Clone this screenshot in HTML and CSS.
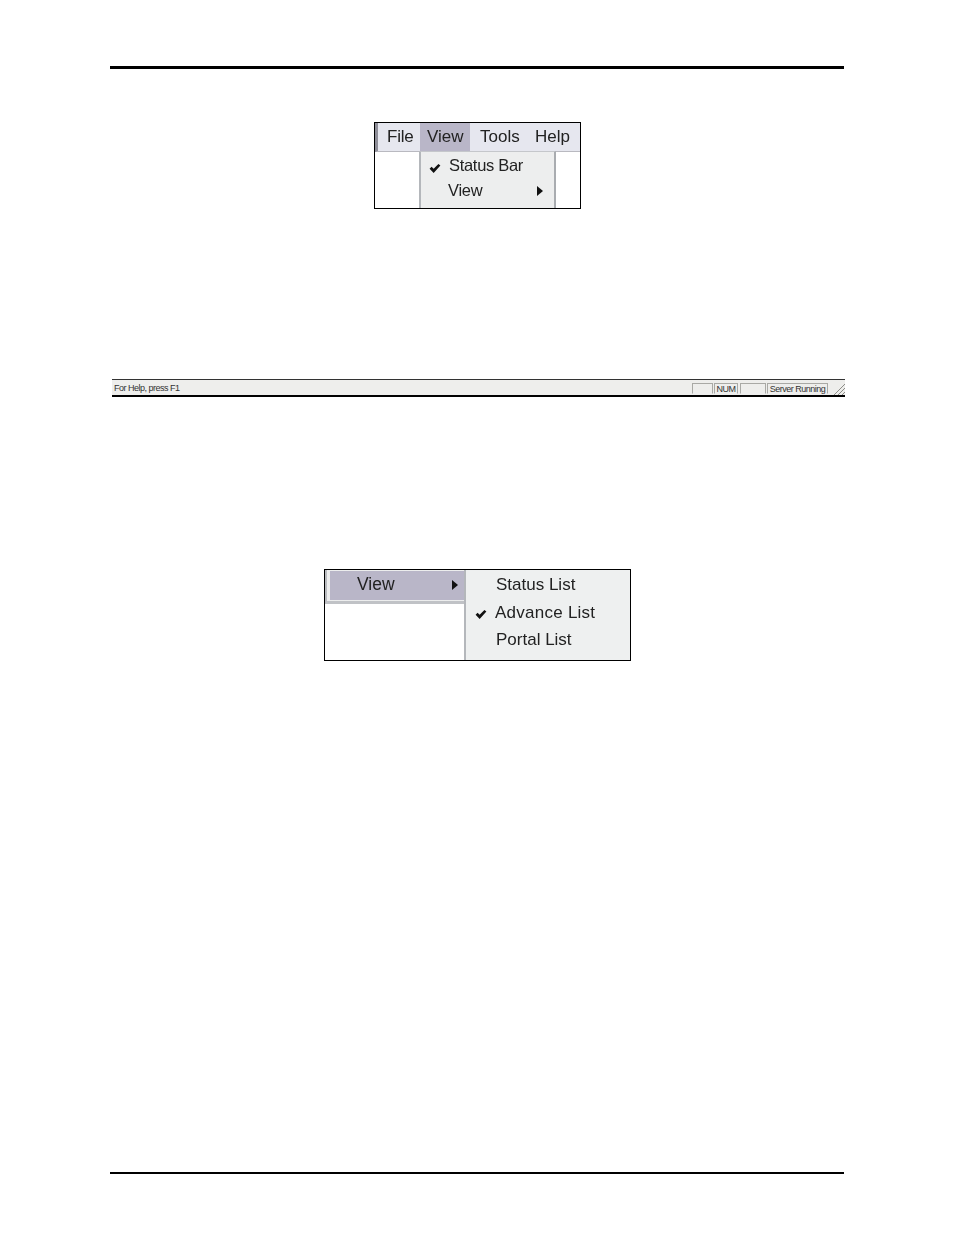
FILE: index.html
```html
<!DOCTYPE html>
<html lang="en">
<head>
<meta charset="utf-8">
<title>Server menus</title>
<link rel="stylesheet" href="styles.css">
</head>
<body>
<div class="page">
  <div class="rule rule-top"></div>

  <div class="shot shot-view">
    <div class="menubar">
      <span class="mb-item mb-file">File</span>
      <span class="mb-item mb-view">View</span>
      <span class="mb-item mb-tools">Tools</span>
      <span class="mb-item mb-help">Help</span>
    </div>
    <div class="dropdown">
      <div class="dd-row dd-first">
        <svg class="check" viewBox="0 0 12 10"><path d="M0 5.4 L2.2 3 L4.5 5.2 L9.8 0 L12 1.8 L4.5 10 Z"/></svg>
        <span class="dd-label">Status Bar</span>
      </div>
      <div class="dd-row">
        <span class="dd-label dd-nocheck">View</span>
        <svg class="arrow" viewBox="0 0 6 10"><path d="M0 0 L6 5 L0 10 Z"/></svg>
      </div>
    </div>
  </div>

  <div class="statusbar">
    <span class="sb-text">For Help, press F1</span>
    <span class="sb-pane sb-p1"></span>
    <span class="sb-pane sb-p2">NUM</span>
    <span class="sb-pane sb-p3"></span>
    <span class="sb-pane sb-p4">Server Running</span>
    <svg class="grip" viewBox="0 0 12 12"><path d="M1 12 L12 1 M5 12 L12 5 M9 12 L12 9"/></svg>
  </div>

  <div class="shot shot-sub">
    <div class="leftmenu">
      <div class="lm-row">
        <span class="lm-label">View</span>
        <svg class="arrow" viewBox="0 0 6 10"><path d="M0 0 L6 5 L0 10 Z"/></svg>
      </div>
    </div>
    <div class="submenu">
      <div class="sm-row"><span class="sm-label">Status List</span></div>
      <div class="sm-row">
        <svg class="check check-sub" viewBox="0 0 12 10"><path d="M0 5.4 L2.2 3 L4.5 5.2 L9.8 0 L12 1.8 L4.5 10 Z"/></svg>
        <span class="sm-label sm-checked">Advance List</span>
      </div>
      <div class="sm-row"><span class="sm-label">Portal List</span></div>
    </div>
  </div>

  <div class="rule rule-bottom"></div>
</div>
</body>
</html>
```
FILE: styles.css
```css
* { box-sizing: border-box; }
html, body { margin: 0; padding: 0; background: #fff; }
body { font-family: "Liberation Sans", Arial, sans-serif; color: #222; }
.page { width: 954px; height: 1235px; padding-top: 66px; overflow: hidden; }

.rule { height: 3px; background: #000; margin-left: 110px; width: 734px; }
.rule-bottom { height: 2px; margin-top: 511px; }

.shot { background: #fff; border: 1px solid #000; display: flex; font-size: 17px; line-height: 1; }
.shot-view { position: relative; flex-direction: column; width: 207px; height: 87px; margin: 53px 0 0 374px; }
.shot-sub { width: 307px; height: 92px; margin: 172px 0 0 324px; }

.menubar, .dropdown, .leftmenu, .submenu { filter: blur(0.3px); }

.menubar { display: flex; align-items: center; height: 29px; background: #e6e7ef; border-left: 3px solid #8e8e98; border-bottom: 1px solid #b9b9c0; }
.mb-item { display: flex; align-items: center; height: 100%; padding-bottom: 2px; }
.mb-file { width: 42px; padding-left: 9px; letter-spacing: -0.2px; }
.mb-view { width: 50px; padding-left: 7px; background: #b9b6c8; }
.mb-tools { width: 56px; padding-left: 10px; }
.mb-help { padding-left: 9px; }

.dropdown { position: absolute; left: 44px; top: 28px; width: 137px; height: 57px; background: #edeeee; border-left: 2px solid #b4b7bb; border-right: 2px solid #a9acb0; border-top: 1px solid #c5c7cb; font-size: 16.5px; }
.dd-row { display: flex; align-items: center; height: 25px; padding-left: 9px; }
.dd-first { height: 26px; padding-top: 1px; }
.dd-label { margin-left: 7px; padding-bottom: 1px; letter-spacing: -0.3px; }
.dd-nocheck { margin-left: 18px; }
.check { width: 12px; height: 9px; fill: #111; flex: none; }
.dd-first .check { margin-top: 5px; margin-left: -1px; margin-right: 1px; }
.arrow { width: 6px; height: 10px; fill: #111; flex: none; }
.dd-row .arrow { margin-left: auto; margin-right: 11px; }

.statusbar { position: relative; display: flex; align-items: center; width: 733px; height: 18px; margin: 170px 0 0 112px; background: #eeeeec; border-top: 1px solid #333; border-bottom: 2px solid #000; font-size: 9px; letter-spacing: -0.5px; color: #333; white-space: nowrap; }
.sb-text { margin-left: 2px; margin-right: auto; padding-top: 1px; }
.sb-pane { height: 11px; border: 1px solid #a9a9a5; border-bottom-color: #eee; display: flex; align-items: center; justify-content: center; margin-top: 2px; }
.sb-p1 { width: 21px; margin-right: 1px; }
.sb-p2 { width: 24px; margin-right: 2px; }
.sb-p3 { width: 26px; margin-right: 1px; }
.sb-p4 { width: 61px; margin-right: 5px; }
.grip { width: 12px; height: 12px; stroke: #8d8d88; stroke-width: 1; fill: none; margin-top: 2px; }

.leftmenu { width: 139px; height: 34px; border-left: 2px solid #b9bbbf; border-bottom: 3px solid #c0c2c6; background: #eceded; padding: 1px 0 0 3px; }
.lm-row { display: flex; align-items: center; height: 29px; background: #b9b6c8; padding-left: 27px; padding-bottom: 2px; font-size: 17.5px; }
.lm-row .arrow { margin-left: auto; margin-right: 6px; }
.submenu { flex: 1; height: 100%; background: #eef0f0; border-left: 2px solid #b4b7bb; padding-top: 0; }
.sm-row { display: flex; align-items: center; height: 28px; padding-left: 30px; }
.sm-row:last-child { padding-bottom: 1px; }
.sm-checked { letter-spacing: 0.25px; margin-left: -1px; }
.check-sub { margin-left: -21px; margin-right: 9px; margin-top: 5px; }
```
